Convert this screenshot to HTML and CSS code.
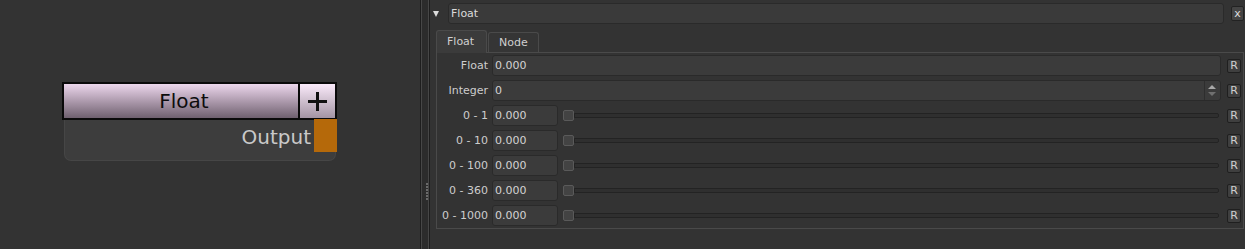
FILE: index.html
```html
<!DOCTYPE html>
<html lang="en">
<head>
    <meta charset="UTF-8">
    <meta name="viewport" content="width=device-width, initial-scale=1.0">
    <title>Float Node</title>
    <link rel="stylesheet" href="styles.css">
</head>
<body>
    <div class="app">
        <div class="graph">
            <div class="node">
                <div class="node-head">
                    <div class="node-title">Float</div>
                    <div class="node-add">
                        <svg width="19" height="19" viewBox="0 0 19 19"><rect x="0" y="8" width="19" height="3" fill="#111"/><rect x="8" y="0" width="3" height="19" fill="#111"/></svg>
                    </div>
                </div>
                <div class="node-body">
                    <span class="port-label">Output</span>
                    <span class="port"></span>
                </div>
            </div>
        </div>

        <div class="splitter">
            <div class="grip">
                <span></span><span></span><span></span><span></span><span></span><span></span>
            </div>
        </div>

        <div class="props">
            <div class="props-head">
                <span class="collapse"></span>
                <div class="title-field">Float</div>
                <button class="close-btn">x</button>
            </div>

            <div class="tabs">
                <div class="tab active">Float</div>
                <div class="tab">Node</div>
            </div>

            <div class="pane">
                <div class="row">
                    <label class="row-label">Float</label>
                    <div class="field wide">0.000</div>
                    <button class="reset">R</button>
                </div>
                <div class="row">
                    <label class="row-label">Integer</label>
                    <div class="field wide spin-field">
                        <span class="spin-value">0</span>
                        <span class="spinner">
                            <span class="arrow up"></span>
                            <span class="arrow down"></span>
                        </span>
                    </div>
                    <button class="reset">R</button>
                </div>
                <div class="row">
                    <label class="row-label">0 - 1</label>
                    <div class="field short">0.000</div>
                    <div class="slider"><span class="handle"></span><span class="track"></span></div>
                    <button class="reset">R</button>
                </div>
                <div class="row">
                    <label class="row-label">0 - 10</label>
                    <div class="field short">0.000</div>
                    <div class="slider"><span class="handle"></span><span class="track"></span></div>
                    <button class="reset">R</button>
                </div>
                <div class="row">
                    <label class="row-label">0 - 100</label>
                    <div class="field short">0.000</div>
                    <div class="slider"><span class="handle"></span><span class="track"></span></div>
                    <button class="reset">R</button>
                </div>
                <div class="row">
                    <label class="row-label">0 - 360</label>
                    <div class="field short">0.000</div>
                    <div class="slider"><span class="handle"></span><span class="track"></span></div>
                    <button class="reset">R</button>
                </div>
                <div class="row">
                    <label class="row-label">0 - 1000</label>
                    <div class="field short">0.000</div>
                    <div class="slider"><span class="handle"></span><span class="track"></span></div>
                    <button class="reset">R</button>
                </div>
            </div>
        </div>
    </div>
</body>
</html>
```

FILE: styles.css
```css
body {
    margin: 0;
    font-family: "DejaVu Sans", Verdana, sans-serif;
    font-size: 11px;
    color: #d2d2d2;
    background-color: #333333;
}
.app {
    display: flex;
    width: 1245px;
    height: 249px;
    overflow: hidden;
}

/* node graph */
.graph {
    position: relative;
    width: 420px;
    height: 100%;
    background-color: #333333;
}
.node {
    position: absolute;
    left: 62px;
    top: 82px;
    width: 275px;
}
.node-head {
    display: flex;
    height: 38px;
    box-sizing: border-box;
    border: 2px solid #0a0a0a;
    background: linear-gradient(#ecd6ec, #6f606f);
}
.node-title {
    flex: 1;
    padding-left: 6px;
    font-size: 20px;
    line-height: 34px;
    text-align: center;
    color: #0c0c0c;
}
.node-add {
    display: flex;
    align-items: center;
    justify-content: center;
    width: 35px;
    border-left: 2px solid #0a0a0a;
    background: linear-gradient(#faeafa, #a394a3);
}
.node-body {
    display: flex;
    justify-content: flex-end;
    align-items: flex-start;
    height: 41px;
    margin: 0 1px 0 2px;
    box-sizing: border-box;
    border: 1px solid #464646;
    border-top: none;
    border-radius: 0 0 7px 7px;
    background-color: #3d3d3d;
}
.port-label {
    margin-right: 3px;
    padding-top: 1px;
    font-size: 20px;
    line-height: 33px;
    color: #c9c9c9;
}
.port {
    width: 23px;
    height: 33px;
    margin: -1px -2px 0 0;
    background-color: #b5690a;
}

/* splitter */
.splitter {
    width: 10px;
    height: 100%;
    box-sizing: border-box;
    border-left: 1px solid #1e1e1e;
    border-right: 1px solid #1e1e1e;
    background-color: #2c2c2c;
    box-shadow: inset 1px 0 #474747, inset -1px 0 #474747;
}
.grip {
    display: flex;
    flex-direction: column;
    gap: 1px;
    margin: 183px 0 0 5px;
}
.grip span {
    width: 2px;
    height: 2px;
    background-color: #6a6a6a;
}

/* properties panel */
.props {
    flex: 1;
    padding: 3px 1px 0 3px;
    background-color: #333333;
}
.props-head {
    display: flex;
    align-items: center;
    height: 21px;
}
.collapse {
    width: 0;
    height: 0;
    margin-right: 9px;
    border-left: 3px solid transparent;
    border-right: 3px solid transparent;
    border-top: 6px solid #dcdcdc;
}
.title-field {
    flex: 1;
    height: 21px;
    box-sizing: border-box;
    padding-left: 2px;
    line-height: 19px;
    border: 1px solid #2a2a2a;
    border-radius: 3px;
    background-color: #3a3a3a;
    color: #dadada;
}
.close-btn {
    width: 13px;
    height: 15px;
    margin-left: 7px;
    padding: 0;
    font-family: inherit;
    font-size: 11px;
    line-height: 12px;
    color: #dcdcdc;
    border: 1px solid #222;
    border-radius: 2px;
    background-color: #444;
}
.tabs {
    display: flex;
    align-items: flex-end;
    gap: 1px;
    margin: 6px 0 -1px 3px;
}
.tab {
    height: 20px;
    margin-bottom: 1px;
    padding: 0 10px;
    box-sizing: border-box;
    line-height: 20px;
    border: 1px solid #4a4a4a;
    border-bottom: none;
    border-radius: 3px 3px 0 0;
    background-color: #353535;
    color: #cfcfcf;
}
.tab.active {
    position: relative;
    height: 23px;
    margin-bottom: 0;
    width: 51px;
    line-height: 22px;
    background-color: #3b3b3b;
}
.pane {
    display: flex;
    flex-direction: column;
    gap: 4px;
    margin-left: 3px;
    padding: 2px 2px 2px 0;
    border: 1px solid #4a4a4a;
    background-color: #333333;
}
.row {
    display: flex;
    align-items: center;
    height: 21px;
}
.row-label {
    width: 51px;
    margin-right: 4px;
    text-align: right;
    white-space: nowrap;
    color: #cdcdcd;
}
.field {
    height: 21px;
    box-sizing: border-box;
    padding-left: 2px;
    line-height: 20px;
    border: 1px solid #2a2a2a;
    border-radius: 3px;
    background-color: #3b3b3b;
    color: #d4d4d4;
}
.field.wide {
    flex: 1;
}
.field.short {
    width: 66px;
}
.spin-field {
    display: flex;
    padding-right: 1px;
}
.spin-value {
    flex: 1;
}
.spinner {
    display: flex;
    flex-direction: column;
    align-items: center;
    justify-content: center;
    gap: 3px;
    width: 14px;
    border-left: 1px solid #2e2e2e;
}
.arrow {
    width: 0;
    height: 0;
    border-left: 4px solid transparent;
    border-right: 4px solid transparent;
}
.arrow.up {
    border-bottom: 4px solid #a8a8a8;
}
.arrow.down {
    border-top: 4px solid #707070;
}
.slider {
    flex: 1;
    display: flex;
    align-items: center;
    margin: 0 2px 0 5px;
}
.handle {
    width: 11px;
    height: 11px;
    box-sizing: border-box;
    border: 1px solid #5a5a5a;
    border-radius: 2px;
    background-color: #434343;
}
.track {
    flex: 1;
    height: 5px;
    box-sizing: border-box;
    border: 1px solid #232323;
    border-radius: 0 2px 2px 0;
    background-color: #2f2f2f;
}
.reset {
    width: 14px;
    height: 14px;
    margin-left: 6px;
    padding: 0;
    font-family: inherit;
    font-size: 11px;
    line-height: 12px;
    color: #cfcfcf;
    border: 1px solid #1f1f1f;
    border-radius: 2px;
    background-color: #3f3f3f;
}
```
